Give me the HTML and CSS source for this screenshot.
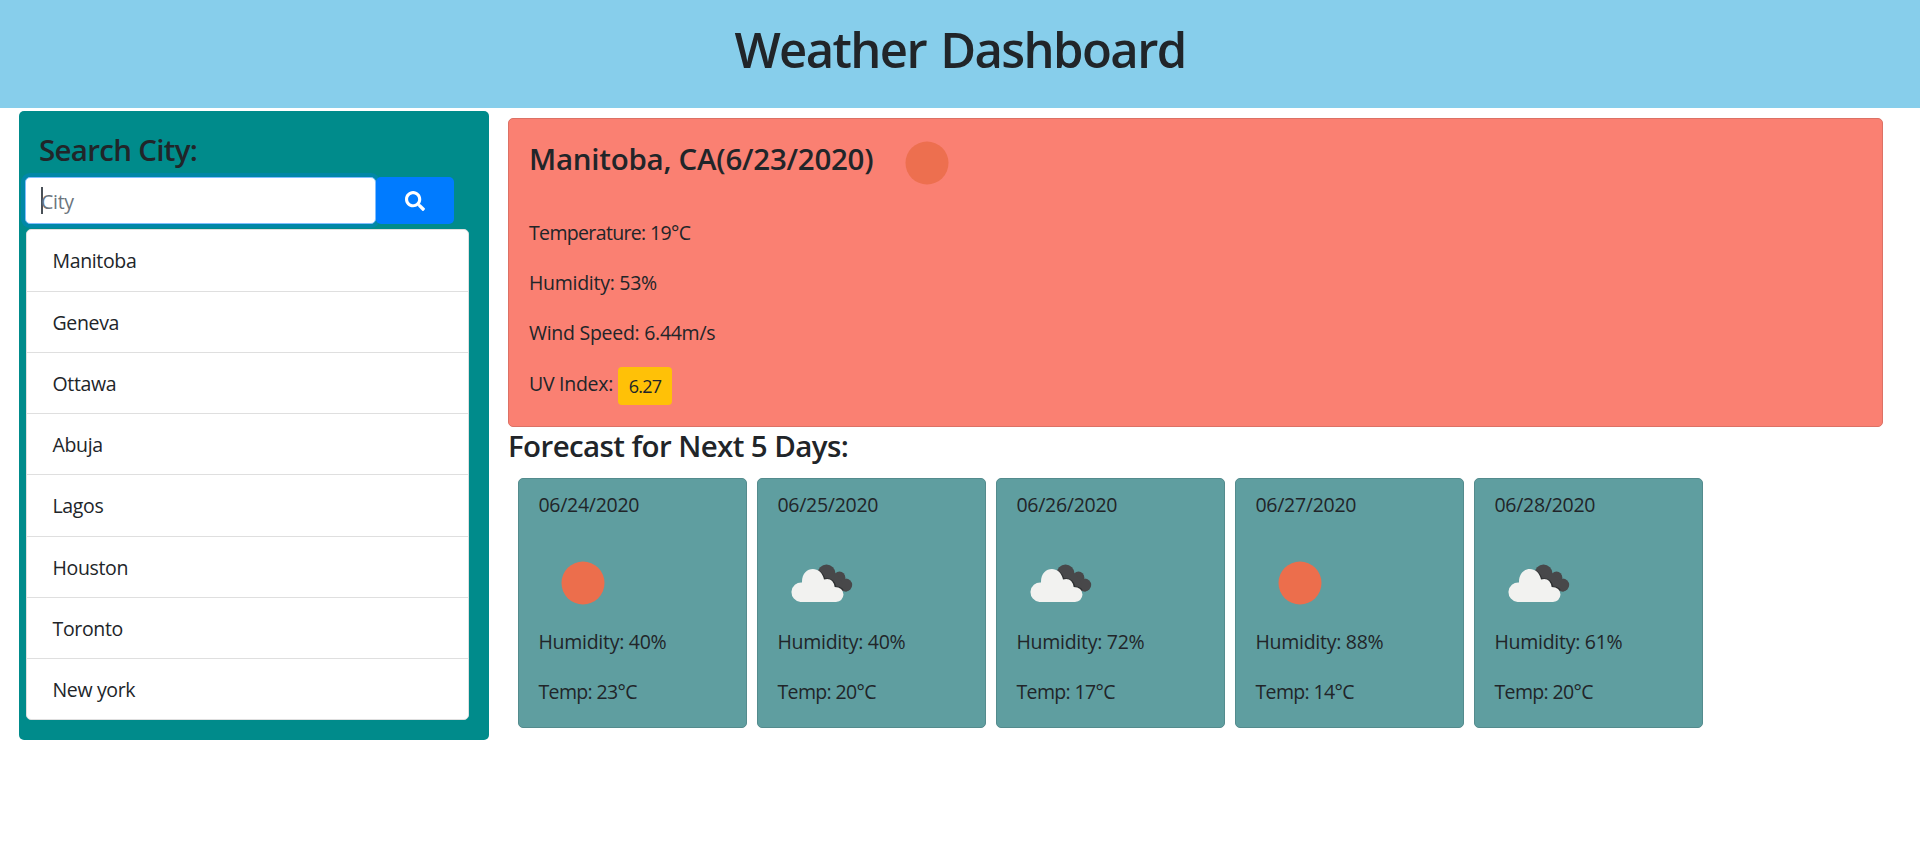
FILE: index.html
```html
<!DOCTYPE html>
<html lang="en">
<head>
<meta charset="utf-8">
<title>Weather Dashboard</title>
<link rel="stylesheet" href="styles.css">
</head>
<body>
<svg class="sprite" width="0" height="0" aria-hidden="true">
  <symbol id="sun" viewBox="0 0 62 50"><circle cx="31" cy="25" r="21.5" fill="#ec6e4c"/></symbol>
  <symbol id="clouds" viewBox="0 0 62 40">
    <g fill="#48484a"><circle cx="35.5" cy="9.5" r="9"/><circle cx="48.5" cy="13.3" r="5.8"/><circle cx="54.7" cy="21" r="6.5"/><path d="M30 10L46 10L56 27.4L40 26Z"/></g>
    <path fill="none" stroke="#2d2f30" stroke-width="1.5" d="M28 7.500Q32 10 33.500 15Q43 14 44.700 23Q49 23 52 26"/>
    <path fill="#f2f2f0" d="M9.500 38A9.700 9.700 0 0 1 11 18.500C10.500 2 30 0 33 15.500Q42 13 43.600 23Q52 23 52.500 30.500Q52 37 45 38Z"/>
  </symbol>
</svg>
<header class="banner"><h1>Weather Dashboard</h1></header>
<main class="layout">
  <aside class="sidebar">
    <h2 class="sidebar-title">Search City:</h2>
    <form class="search">
      <div class="search-field"><span class="caret"></span><span class="placeholder">City</span></div>
      <button class="search-button" type="button" aria-label="Search">
        <svg width="20" height="20" viewBox="0 0 512 512"><path fill="#fff" d="M505 442.7L405.300 343c-4.500-4.500-10.600-7-17-7H372c27.600-35.300 44-79.700 44-128C416 93.100 322.900 0 208 0S0 93.100 0 208s93.100 208 208 208c48.300 0 92.700-16.400 128-44v16.300c0 6.400 2.500 12.500 7 17l99.700 99.700c9.400 9.400 24.600 9.400 33.900 0l28.300-28.300c9.400-9.400 9.400-24.600.1-34zM208 336c-70.700 0-128-57.200-128-128 0-70.700 57.200-128 128-128 70.700 0 128 57.200 128 128 0 70.700-57.200 128-128 128z"/></svg>
      </button>
    </form>
    <ul class="cities">
      <li>Manitoba</li><li>Geneva</li><li>Ottawa</li><li>Abuja</li><li>Lagos</li><li>Houston</li><li>Toronto</li><li>New york</li>
    </ul>
  </aside>
  <section class="content">
    <article class="current">
      <div class="current-head"><h2>Manitoba, CA(6/23/2020)</h2><svg class="sun" width="62" height="50"><use href="#sun"/></svg></div>
      <p class="temperature">Temperature: 19°C</p>
      <p>Humidity: 53%</p>
      <p>Wind Speed: 6.44m/s</p>
      <p class="uv"><span>UV Index:</span><span class="uv-badge">6.27</span></p>
    </article>
    <h2 class="forecast-title">Forecast for Next 5 Days:</h2>
    <div class="forecast">
      <article class="day"><p>06/24/2020</p><svg class="day-sun" width="62" height="50"><use href="#sun"/></svg><p>Humidity: 40%</p><p class="temperature">Temp: 23°C</p></article>
      <article class="day"><p>06/25/2020</p><svg class="day-clouds" width="62" height="40"><use href="#clouds"/></svg><p>Humidity: 40%</p><p class="temperature">Temp: 20°C</p></article>
      <article class="day"><p>06/26/2020</p><svg class="day-clouds" width="62" height="40"><use href="#clouds"/></svg><p>Humidity: 72%</p><p class="temperature">Temp: 17°C</p></article>
      <article class="day"><p>06/27/2020</p><svg class="day-sun" width="62" height="50"><use href="#sun"/></svg><p>Humidity: 88%</p><p class="temperature">Temp: 14°C</p></article>
      <article class="day"><p>06/28/2020</p><svg class="day-clouds" width="62" height="40"><use href="#clouds"/></svg><p>Humidity: 61%</p><p class="temperature">Temp: 20°C</p></article>
    </div>
  </section>
</main>
</body>
</html>
```
FILE: styles.css
```css
* { box-sizing: border-box; }
body { margin: 0; background: #fff; color: #212529; font: 400 19.5px/30px "Open Sans", "Noto Sans", sans-serif; letter-spacing: -.28px; }
h1, h2, p, ul { margin: 0; padding: 0; }
svg { flex-shrink: 0; }
.sprite { display: block; }
.banner { height: 108px; padding-top: 19px; background: #87ceeb; text-align: center; }
h1 { font-size: 49px; line-height: 60px; font-weight: 600; letter-spacing: -1.6px; word-spacing: 3px; }
h2 { font-size: 29.5px; line-height: 36px; font-weight: 600; letter-spacing: -.6px; white-space: nowrap; }
.layout { display: flex; align-items: flex-start; padding: 3px 37px 0 19px; }
.sidebar { width: 470px; height: 629px; padding: 21px 20px 0 6px; background: #008b8b; border-radius: 5px; }
.sidebar-title { margin: 0 0 9px 14px; letter-spacing: -.7px; }
.search { display: flex; height: 47px; }
.search-field { display: flex; align-items: center; width: 351px; padding-left: 15px; color: #6c757d; background: #fff; border: 1px solid #80bdff; border-radius: 5px; box-shadow: 0 0 0 4px rgba(0, 123, 255, .25); z-index: 1; }
.caret { width: 2px; height: 27px; margin-right: -2px; background: #495057; }
.placeholder { padding-top: 2px; }
.search-button { display: flex; align-items: center; justify-content: center; width: 78px; padding: 0; border: 0; border-radius: 5px; background: #007bff; }
.cities { width: 443px; margin: 5px 0 0 1px; list-style: none; letter-spacing: -.35px; background: #fff; border: 1px solid #dfdfdf; border-radius: 5px; }
.cities li { height: 61.15px; padding: 16px 25.5px 0; border-bottom: 1px solid #dfdfdf; }
.cities li:first-child { height: 62px; }
.cities li:last-child { height: 60px; border-bottom: 0; }
.content { flex: 1; margin: 7px 0 0 19px; }
.current { height: 309px; padding: 20px; border: 1px solid #dc7165; border-radius: 5px; background: #fa8072; }
.current-head { display: flex; height: 79px; padding-top: 2px; }
.current h2 { width: 367px; letter-spacing: -.25px; }
.sun { margin-top: -3px; opacity: .9; }
.current p { margin-bottom: 20px; }
.temperature { letter-spacing: -.65px; }
.current .uv { display: flex; gap: 5px; padding-top: 1px; }
.uv-badge { width: 54px; height: 38px; margin-top: -2px; line-height: 38px; font-size: 18px; letter-spacing: -.8px; text-align: center; border-radius: 4px; background: #ffc107; }
.forecast-title { margin: 1px 0 14px; }
.forecast { display: flex; gap: 10px; padding-left: 10px; }
.day { display: flex; flex-direction: column; width: 229px; height: 250px; padding: 11px 20px 0 19.5px; border: 1px solid #548b8d; border-radius: 5px; background: #5f9ea0; }
.day p { margin-bottom: 20px; }
.day-sun { margin: 18px 0 19px 13.5px; }
.day-clouds { margin: 24px 0 23px 13.5px; }
```
